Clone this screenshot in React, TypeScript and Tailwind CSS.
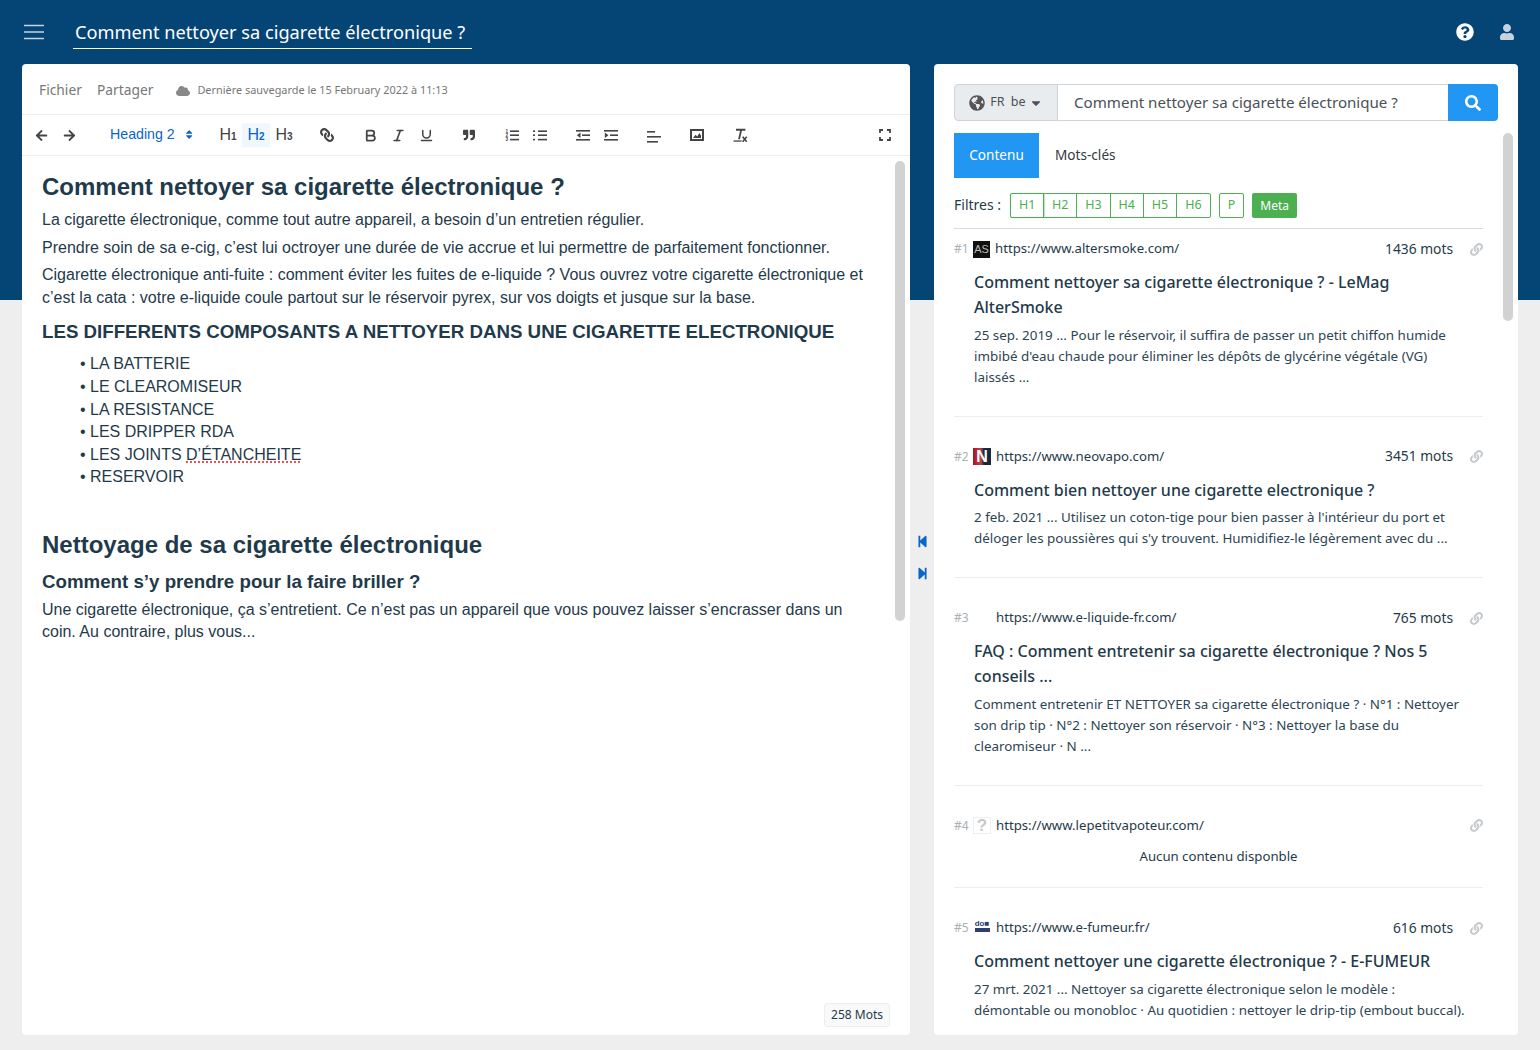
import { ReactNode } from "react";
import { Bold, Italic, Underline } from "lucide-react";
import {
  FaArrowLeft, FaArrowRight, FaCaretDown, FaCloud, FaGlobeAmericas, FaLink,
  FaQuestionCircle, FaQuoteRight, FaSearch, FaSort, FaStepBackward, FaStepForward, FaUser,
} from "react-icons/fa";

const uiFont = "font-['Noto_Sans','Open_Sans',sans-serif]";

function HeadingBtn({ n, active }: { n: number; active?: boolean }) {
  return (
    <span className={`flex h-6 w-7 items-center justify-center font-['Liberation_Sans',sans-serif] text-[16px] ${active ? "bg-[#f0f7fd] text-[#0a66c8]" : "text-[#444]"}`}>
      H<span className="mt-[3px] text-[10px] font-bold">{n}</span>
    </span>
  );
}

function Lines({ kind }: { kind: "ol" | "ul" | "out" | "in" | "align" }) {
  if (kind === "align") {
    return (
      <svg width="14" height="14" viewBox="0 0 14 14" fill="#444">
        <rect x="0" y="1" width="8" height="1.6" />
        <rect x="0" y="6" width="14" height="1.6" />
        <rect x="0" y="11" width="11" height="1.6" />
      </svg>
    );
  }
  return (
    <svg width="14" height="13" viewBox="0 0 14 13" fill="#444">
      {kind === "ol" || kind === "ul" ? (
        <>
          <rect x="5" y="1.4" width="9" height="1.6" />
          <rect x="5" y="5.4" width="9" height="1.6" />
          <rect x="5" y="9.8" width="9" height="1.6" />
          {kind === "ul" ? (
            <>
              <rect x="0" y="1.4" width="2" height="1.6" />
              <rect x="0" y="5.4" width="2" height="1.6" />
              <rect x="0" y="9.8" width="2" height="1.6" />
            </>
          ) : (
            <g fontFamily="Liberation Sans, sans-serif" fontSize="4.6" fontWeight="700">
              <text x="0.4" y="4">1</text>
              <text x="0.4" y="8.2">2</text>
              <text x="0.4" y="12.4">3</text>
            </g>
          )}
        </>
      ) : (
        <>
          <rect x="0" y="1" width="14" height="1.6" />
          <rect x="6" y="5.4" width="8" height="1.6" />
          <rect x="0" y="10" width="14" height="1.6" />
          {kind === "out" ? <path d="M4.5 3.6v5.4L0.8 6.3z" /> : <path d="M0.8 3.6v5.4l3.7-2.7z" />}
        </>
      )}
    </svg>
  );
}

function ToolBtn({ x, children }: { x: string; children: ReactNode }) {
  return <span className={`flex w-7 items-center justify-center text-[#444] ${x}`}>{children}</span>;
}

function Toolbar() {
  return (
    <div className="flex h-[41px] shrink-0 items-center border-b border-[#eeeeee] pl-[5px] pr-[19px]">
      <ToolBtn x=""><FaArrowLeft size={13} /></ToolBtn>
      <ToolBtn x=""><FaArrowRight size={13} /></ToolBtn>
      <span className="ml-[27px] flex w-[84px] items-center whitespace-nowrap font-['Liberation_Sans',sans-serif] text-[14.2px] text-[#0a66c8]">
        Heading 2<FaSort size={11} className="ml-[9px]" />
      </span>
      <span className="ml-[20px] flex">
        <HeadingBtn n={1} />
        <HeadingBtn n={2} active />
        <HeadingBtn n={3} />
      </span>
      <ToolBtn x="ml-[15px]"><FaLink size={14} className="-scale-x-100" /></ToolBtn>
      <ToolBtn x="ml-[15px]"><Bold size={15} strokeWidth={2.8} /></ToolBtn>
      <ToolBtn x=""><Italic size={15} strokeWidth={2.6} /></ToolBtn>
      <ToolBtn x=""><Underline size={15} strokeWidth={2.4} /></ToolBtn>
      <ToolBtn x="ml-[15px]"><FaQuoteRight size={12} /></ToolBtn>
      <ToolBtn x="ml-[15px]"><Lines kind="ol" /></ToolBtn>
      <ToolBtn x=""><Lines kind="ul" /></ToolBtn>
      <ToolBtn x="ml-[15px]"><Lines kind="out" /></ToolBtn>
      <ToolBtn x=""><Lines kind="in" /></ToolBtn>
      <ToolBtn x="ml-[15px] pt-1"><Lines kind="align" /></ToolBtn>
      <ToolBtn x="ml-[15px]">
        <svg width="14" height="12" viewBox="0 0 14 12">
          <rect x="1" y="1" width="12" height="10" fill="none" stroke="#444" strokeWidth="2" />
          <path d="M3 9l2.6-3.2 1.6 1.6L9.4 4 11 6.5V9z" fill="#444" />
        </svg>
      </ToolBtn>
      <ToolBtn x="ml-[15px]">
        <svg width="15" height="15" viewBox="0 0 15 15" fill="#444">
          <path d="M3 0.8h9.4v1.9H8.9L6.9 11.2H5.1l2-8.5H3z" />
          <rect x="0.5" y="12.4" width="8" height="1.3" />
          <path d="M9 9.2l1.4-.9 1.3 1.7 1.4-1.7 1.2.9-1.6 2 1.6 2.1-1.2.9-1.4-1.8-1.3 1.8-1.4-.9 1.7-2.1z" />
        </svg>
      </ToolBtn>
      <span className="ml-auto">
        <svg width="12" height="12" viewBox="0 0 12 12" fill="none" stroke="#444" strokeWidth="1.8" className="block">
          <path d="M1 4V1h3M8 1h3v3M11 8v3H8M4 11H1V8" />
        </svg>
      </span>
    </div>
  );
}

function Editor() {
  return (
    <div className="relative flex min-w-0 flex-1 flex-col overflow-hidden rounded-[4px] bg-white">
      <div className={`flex h-[51px] shrink-0 items-center border-b border-[#eeeeee] pl-[17px] pt-[3px] text-[#777] ${uiFont}`}>
        <span className="text-[13.8px]">Fichier</span>
        <span className="ml-[15px] text-[13.8px]">Partager</span>
        <FaCloud size={14} className="ml-[23px] text-[#888]" />
        <span className="ml-[7px] text-[10.9px]">Dernière sauvegarde le 15 February 2022 à 11:13</span>
      </div>
      <Toolbar />
      <div className="flex-1 pl-5 pr-[44px] pt-[15px] font-['Liberation_Sans',sans-serif] text-[16px] leading-[22.86px] text-[#1f3a4a]">
        <h1 className="text-[24px] font-bold leading-[32px]">Comment nettoyer sa cigarette électronique ?</h1>
        <p className="mt-[6px]">La cigarette électronique, comme tout autre appareil, a besoin d’un entretien régulier.</p>
        <p className="mt-[5px]">Prendre soin de sa e-cig, c’est lui octroyer une durée de vie accrue et lui permettre de parfaitement fonctionner.</p>
        <p className="mt-[4px]">Cigarette électronique anti-fuite : comment éviter les fuites de e-liquide ? Vous ouvrez votre cigarette électronique et c’est la cata : votre e-liquide coule partout sur le réservoir pyrex, sur vos doigts et jusque sur la base.</p>
        <h3 className="mt-[11px] text-[18.72px] font-bold leading-[24px]">LES DIFFERENTS COMPOSANTS A NETTOYER DANS UNE CIGARETTE ELECTRONIQUE</h3>
        <ul className="mt-[9px] pl-[48px] leading-[22.6px]">
          {["LA BATTERIE", "LE CLEAROMISEUR", "LA RESISTANCE", "LES DRIPPER RDA"].map((t) => (
            <li key={t} className="relative">
              <span className="absolute -left-[10px]">•</span>{t}
            </li>
          ))}
          <li className="relative">
            <span className="absolute -left-[10px]">•</span>LES JOINTS{" "}
            <span className="underline decoration-[#f05050] decoration-dotted decoration-2 underline-offset-2">D’ÉTANCHEITE</span>
          </li>
          <li className="relative">
            <span className="absolute -left-[10px]">•</span>RESERVOIR
          </li>
        </ul>
        <h2 className="mt-[39.5px] text-[24px] font-bold leading-[32px]">Nettoyage de sa cigarette électronique</h2>
        <h3 className="mt-[9px] text-[18.72px] font-bold leading-[24px]">Comment s’y prendre pour la faire briller ?</h3>
        <p className="mt-[5px]">Une cigarette électronique, ça s’entretient. Ce n’est pas un appareil que vous pouvez laisser s’encrasser dans un coin. Au contraire, plus vous...</p>
      </div>
      <div className="absolute right-[5px] top-[97px] h-[460px] w-[10px] rounded-full bg-[#d2d2d2]" />
      <span className={`absolute bottom-[8px] right-[20px] rounded-[3px] border border-[#eeeeee] bg-[#f8f9fa] px-[6px] py-[2px] text-[12px] text-[#1f3a4a] ${uiFont}`}>258 Mots</span>
    </div>
  );
}

function Favicon({ kind }: { kind: string }) {
  if (kind === "as") {
    return <span className="flex h-[17px] w-[17px] items-center justify-center bg-[#111] font-['Liberation_Sans',sans-serif] text-[11px] text-[#bbb]">AS</span>;
  }
  if (kind === "n") {
    return <span className="flex h-[17px] w-[18px] items-center justify-center bg-[linear-gradient(90deg,#a81620,#c04048_45%,#16293c_60%)] font-['Liberation_Sans',sans-serif] text-[16px] font-bold text-white">N</span>;
  }
  if (kind === "q") {
    return <span className="flex h-[17px] w-[18px] items-center justify-center border border-[#eeeeee] font-['Liberation_Sans',sans-serif] text-[17px] font-bold text-[#c8c8c8]">?</span>;
  }
  if (kind === "do") {
    return (
      <span className="flex h-[17px] w-[18px] flex-col items-center">
        <span className="whitespace-nowrap font-['Liberation_Sans',sans-serif] text-[8px] font-bold leading-[8px] text-[#2c3e72]">do■</span>
        <span className="h-[4px] w-[15px] bg-[#2c3e72]" />
      </span>
    );
  }
  return <span className="h-[17px] w-[18px]" />;
}

type Res = { n: number; icon: string; url: string; words?: string; title?: string[]; body?: string[] };

const results: Res[] = [
  {
    n: 1, icon: "as", url: "https://www.altersmoke.com/", words: "1436 mots",
    title: ["Comment nettoyer sa cigarette électronique ? - LeMag", "AlterSmoke"],
    body: ["25 sep. 2019 ... Pour le réservoir, il suffira de passer un petit chiffon humide", "imbibé d'eau chaude pour éliminer les dépôts de glycérine végétale (VG)", "laissés ..."],
  },
  {
    n: 2, icon: "n", url: "https://www.neovapo.com/", words: "3451 mots",
    title: ["Comment bien nettoyer une cigarette electronique ?"],
    body: ["2 feb. 2021 ... Utilisez un coton-tige pour bien passer à l'intérieur du port et", "déloger les poussières qui s'y trouvent. Humidifiez-le légèrement avec du ..."],
  },
  {
    n: 3, icon: "none", url: "https://www.e-liquide-fr.com/", words: "765 mots",
    title: ["FAQ : Comment entretenir sa cigarette électronique ? Nos 5", "conseils ..."],
    body: ["Comment entretenir ET NETTOYER sa cigarette électronique ? · N°1 : Nettoyer", "son drip tip · N°2 : Nettoyer son réservoir · N°3 : Nettoyer la base du", "clearomiseur · N ..."],
  },
  { n: 4, icon: "q", url: "https://www.lepetitvapoteur.com/" },
  {
    n: 5, icon: "do", url: "https://www.e-fumeur.fr/", words: "616 mots",
    title: ["Comment nettoyer une cigarette électronique ? - E-FUMEUR"],
    body: ["27 mrt. 2021 ... Nettoyer sa cigarette électronique selon le modèle :", "démontable ou monobloc · Au quotidien : nettoyer le drip-tip (embout buccal)."],
  },
];

function Result({ r }: { r: Res }) {
  return (
    <div className="mb-[20px] border-b border-[#eeeeee] pb-[28px] pt-[10px] last:border-b-0">
      <div className="flex h-[20px] items-center text-[13.2px] text-[#1f3a4a]">
        <span className="w-[19px] text-[12px] text-[#aab0b5]">#{r.n}</span>
        <Favicon kind={r.icon} />
        <span className="ml-[5px]">{r.url}</span>
        <span className="ml-auto text-[13.8px]">{r.words}</span>
        <FaLink size={13} className="ml-[17px] text-[#c4c8cc]" />
      </div>
      {r.title ? (
        <div className="mt-[11px] pl-5">
          <div className="text-[16px] font-medium leading-[25px] text-[#1f3a4a]">
            {r.title.map((t) => <div key={t}>{t}</div>)}
          </div>
          <div className="mt-[4.5px] text-[13.4px] leading-[21px] text-[#2c4553]">
            {r.body?.map((t) => <div key={t}>{t}</div>)}
          </div>
        </div>
      ) : (
        <div className="-mb-[8px] mt-[10.5px] text-center text-[13.2px] leading-[21px] text-[#1f3a4a]">Aucun contenu disponble</div>
      )}
    </div>
  );
}

function Panel() {
  const filters = ["H1", "H2", "H3", "H4", "H5", "H6"];
  return (
    <div className={`relative flex w-[584px] shrink-0 flex-col overflow-hidden rounded-[4px] bg-white pl-5 pr-[35px] pt-5 ${uiFont}`}>
      <div className="-mr-[15px] flex h-[37px] shrink-0 text-[#495057]">
        <span className="flex w-[104px] items-center justify-center rounded-l-[4px] border border-[#ced4da] bg-[#e9ecef] text-[12.5px]">
          <FaGlobeAmericas size={16} className="mr-[5px] text-[#555]" />
          <span className="[word-spacing:3px]">FR be</span>
          <FaCaretDown size={14} className="ml-[3px]" />
        </span>
        <span className="flex flex-1 items-center border-y border-[#ced4da] pl-4 text-[15.1px]">Comment nettoyer sa cigarette électronique ?</span>
        <span className="flex w-[50px] items-center justify-center rounded-r-[4px] bg-[#2196f3] text-white"><FaSearch size={16} /></span>
      </div>
      <div className="mt-3 flex h-[45px] shrink-0 text-[13.6px]">
        <span className="flex w-[85px] items-center justify-center bg-[#2196f3] text-white">Contenu</span>
        <span className="flex items-center pl-4 text-[#343a40]">Mots-clés</span>
      </div>
      <div className="mt-[15px] flex h-[25px] shrink-0 items-center text-[#1f3a4a]">
        <span className="-mt-[2px] w-[56px] text-[14px]">Filtres :</span>
        <span className="flex rounded-[2px] border border-[#4caf50]">
          {filters.map((f) => (
            <span key={f} className="flex h-[23px] w-[33.2px] items-center justify-center border-r border-[#4caf50] text-[12.5px] text-[#4caf50] first:shadow-[0_0_2px_#4caf50] last:border-r-0">{f}</span>
          ))}
        </span>
        <span className="ml-2 flex h-[25px] w-[25px] items-center justify-center rounded-[2px] border border-[#4caf50] text-[12.5px] text-[#4caf50]">P</span>
        <span className="ml-2 flex h-[25px] w-[45px] items-center justify-center rounded-[2px] bg-[#4caf50] text-[12px] text-white">Meta</span>
      </div>
      <div className="mt-[10px] h-0 flex-1 border-t border-[#d8dadc]">
        {results.map((r) => <Result key={r.n} r={r} />)}
      </div>
      <div className="absolute right-[5px] top-[69px] h-[188px] w-[10px] rounded-full bg-[#d2d2d2]" />
    </div>
  );
}

export default function App() {
  return (
    <div className="flex h-[1050px] flex-col overflow-hidden bg-[linear-gradient(#054576_300px,#eeeeee_300px)]">
      <header className={`flex h-16 shrink-0 items-center pl-6 pr-[25px] ${uiFont}`}>
        <svg width="20" height="16" viewBox="0 0 20 16" stroke="#c6d2de" strokeWidth="1.6"><path d="M0 1.5h20M0 8h20M0 14.5h20" /></svg>
        <span className="ml-[29px] flex h-[33px] w-[399px] items-center whitespace-nowrap border-b border-white pl-[2px] pt-[2px] text-[18.2px] text-white">Comment nettoyer sa cigarette électronique ?</span>
        <FaQuestionCircle size={18} className="ml-auto text-white" />
        <FaUser size={16} className="ml-[25px] text-[#c6d2de]" />
      </header>
      <main className="flex min-h-0 flex-1 pb-[15px] pl-[22px] pr-[22px]">
        <Editor />
        <div className="flex w-6 shrink-0 flex-col items-center pt-[471px] text-[#0a66c8]">
          <FaStepBackward size={13} />
          <FaStepForward size={13} className="mt-[19px]" />
        </div>
        <Panel />
      </main>
    </div>
  );
}
